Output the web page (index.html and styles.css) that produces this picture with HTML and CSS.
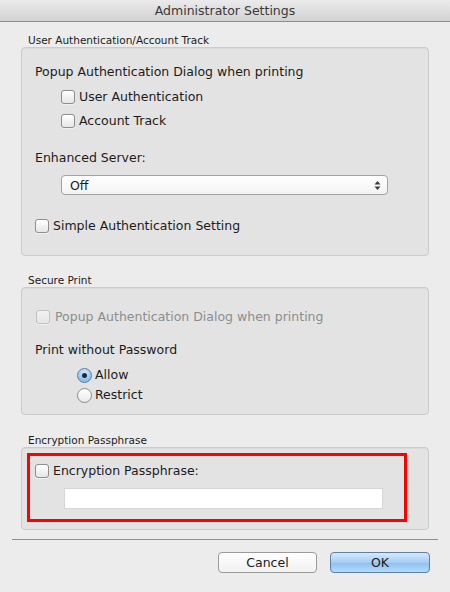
FILE: index.html
```html
<!DOCTYPE html>
<html>
<head>
<meta charset="utf-8">
<link rel="stylesheet" href="styles.css">
</head>
<body>
<div class="window">
  <div class="titlebar">Administrator Settings</div>
  <div class="content">
    <div class="section-label first">User Authentication/Account Track</div>
    <div class="box box-auth">
      <div class="row heading r-popup">Popup Authentication Dialog when printing</div>
      <label class="row indent r-user"><span class="cb"></span>User Authentication</label>
      <label class="row indent r-acct"><span class="cb"></span>Account Track</label>
      <div class="row heading r-enh">Enhanced Server:</div>
      <div class="select"><span>Off</span>
        <svg class="arrows" width="7" height="11" viewBox="0 0 7 11"><path d="M3.5 1 L6.5 4.5 H0.5 Z M3.5 10 L6.5 6.5 H0.5 Z" fill="#3c3c3c"/></svg>
      </div>
      <label class="row r-simple"><span class="cb"></span>Simple Authentication Setting</label>
    </div>

    <div class="section-label second">Secure Print</div>
    <div class="box box-secure">
      <label class="row disabled r-dis"><span class="cb cb-dis"></span>Popup Authentication Dialog when printing</label>
      <div class="row heading r-pwp">Print without Password</div>
      <label class="row radio-row r-allow"><span class="radio on"><span class="dot"></span></span>Allow</label>
      <label class="row radio-row r-restrict"><span class="radio"></span>Restrict</label>
    </div>

    <div class="section-label">Encryption Passphrase</div>
    <div class="box box-enc">
      <div class="highlight">
        <label class="row r-enc"><span class="cb"></span>Encryption Passphrase:</label>
        <div class="field"></div>
      </div>
    </div>
  </div>
  <div class="separator"></div>
  <div class="buttons">
    <button class="btn">Cancel</button>
    <button class="btn btn-default">OK</button>
  </div>
</div>
</body>
</html>
```
FILE: styles.css
```css
* { box-sizing: border-box; }
html, body { margin: 0; padding: 0; }
body {
  width: 450px;
  height: 592px;
  background: #ececec;
  font-family: "DejaVu Sans", "Liberation Sans", sans-serif;
  color: #1b1b1b;
  overflow: hidden;
}
.window { width: 450px; height: 592px; display: flex; flex-direction: column; }
.titlebar {
  height: 22px;
  line-height: 21px;
  text-align: center;
  font-size: 12.5px;
  color: #3a3a3a;
  background: linear-gradient(#ebebeb, #d2d2d2);
  border-bottom: 1px solid #8c8c8c;
}
.content { padding: 0 21px 0 21px; display: flex; flex-direction: column; }
.section-label {
  font-size: 10.5px;
  height: 14px;
  line-height: 14px;
  padding-left: 7px;
  margin-top: 18px;
  color: #1b1b1b;
}
.section-label.first { margin-top: 11px; }
.section-label.second { margin-top: 17px; }
.box {
  background: #e3e3e3;
  border: 1px solid #cbcbcb;
  border-radius: 4px;
  box-shadow: inset 0 1px 0 #dadada;
  display: flex;
  flex-direction: column;
  padding-left: 13px;
}
.box-auth { height: 209px; padding-top: 14px; }
.box-secure { height: 128px; padding-top: 19px; }
.box-enc { height: 83px; padding: 5px 0 0 5px; }
.row {
  height: 20px;
  line-height: 20px;
  font-size: 12.5px;
  display: flex;
  align-items: center;
  white-space: nowrap;
}
.indent { padding-left: 26px; }
.r-user { margin-top: 5px; }
.r-acct { margin-top: 4px; }
.r-enh { margin-top: 17px; }
.r-simple { margin-top: 21px; }
.r-pwp { margin-top: 13px; }
.r-allow { margin-top: 5px; padding-left: 42px; }
.r-restrict { padding-left: 42px; }
.cb {
  width: 14px;
  height: 14px;
  border: 1px solid #8e8e8e;
  border-radius: 3px;
  background: linear-gradient(#ffffff, #e6e6e6);
  box-shadow: 0 1px 0 rgba(255,255,255,0.5);
  margin-right: 4px;
  flex: none;
}
.r-dis { padding-left: 1px; }
.cb-dis { border-color: #c2c2c2; background: linear-gradient(#f2f2f2, #e6e6e6); margin-right: 5px; }
.disabled { color: #8d8d8d; }
.select {
  margin: 7px 0 0 26px;
  width: 327px;
  height: 20px;
  border: 1px solid #a3a3a3;
  border-radius: 4px;
  background: linear-gradient(#ffffff, #f3f3f3);
  display: flex;
  align-items: center;
  justify-content: space-between;
  padding: 0 6px 0 8px;
  font-size: 12.5px;
}
.radio {
  width: 15px;
  height: 15px;
  border-radius: 50%;
  border: 1px solid #8a8a8a;
  background: linear-gradient(#ffffff, #e9e9e9);
  margin-right: 3px;
  flex: none;
  display: flex;
  align-items: center;
  justify-content: center;
}
.radio.on {
  border-color: #5a7fa8;
  background: radial-gradient(circle at 50% 30%, #d8eafb, #8dbfee 70%, #6aa5e2);
}
.dot { width: 5px; height: 5px; border-radius: 50%; background: #1c2a3a; }
.highlight {
  width: 380px;
  height: 69px;
  border: 3px solid #ff0000;
  padding: 5px 0 0 5px;
  display: flex;
  flex-direction: column;
}
.field {
  margin: 7px 0 0 29px;
  width: 319px;
  height: 21px;
  background: #ffffff;
  border: 1px solid #d6d6d6;
}
.separator {
  margin: 9px 12px 0 12px;
  height: 1px;
  background: #8e8e8e;
}
.buttons {
  display: flex;
  justify-content: flex-end;
  gap: 13px;
  padding: 12px 20px 0 0;
}
.btn {
  width: 99px;
  height: 21px;
  border: 1px solid #9a9a9a;
  border-radius: 4px;
  background: linear-gradient(#ffffff, #f1f1f1);
  font-family: "DejaVu Sans", "Liberation Sans", sans-serif;
  font-size: 12.5px;
  color: #1b1b1b;
  padding: 0;
  line-height: 19px;
}
.btn-default {
  width: 100px;
  border-color: #5e7fa6;
  background: linear-gradient(#d6e9fb, #a4cdf4 50%, #8cc0f0 51%, #b4dafc);
}
```
